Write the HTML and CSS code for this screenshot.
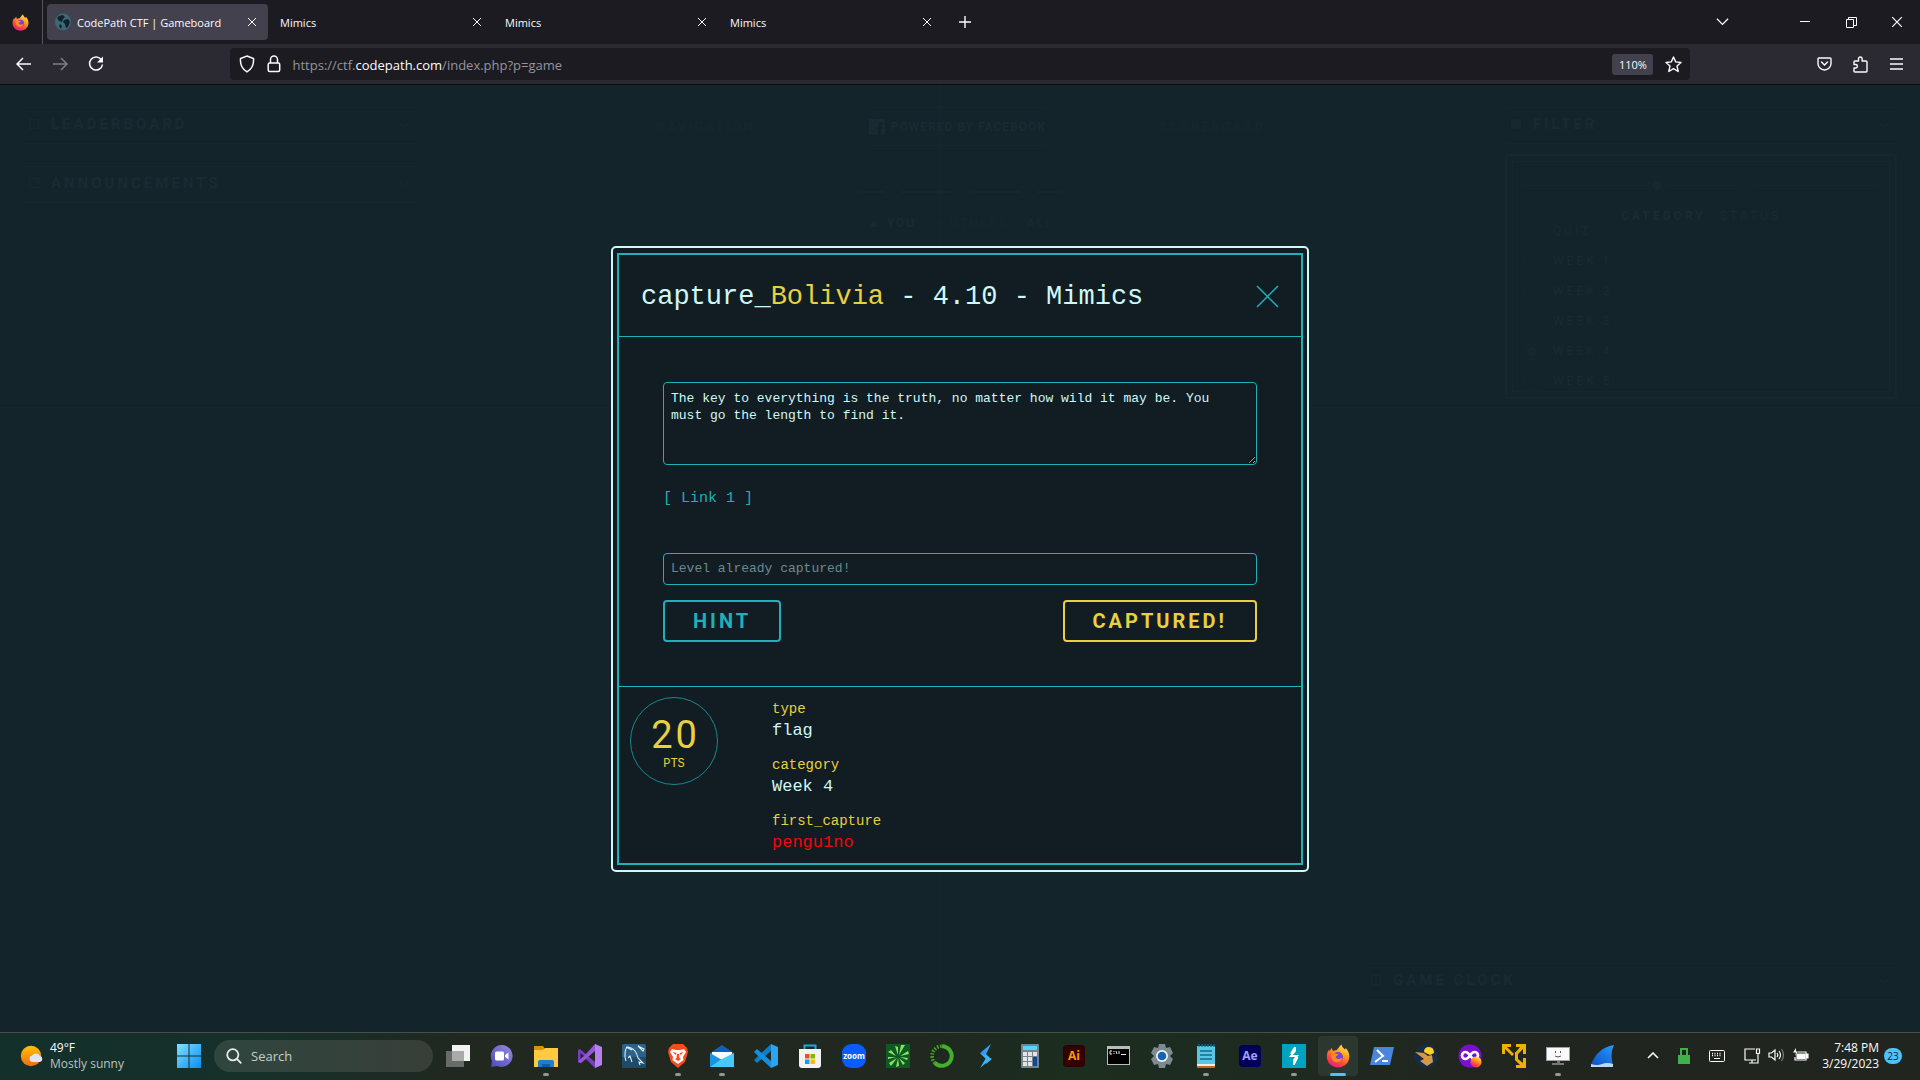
FILE: index.html
```html
<!DOCTYPE html>
<html lang="en">
<head>
<meta charset="utf-8">
<title>CodePath CTF | Gameboard</title>
<link rel="stylesheet" href="styles.css">
</head>
<body>
<svg width="0" height="0" class="defs" aria-hidden="true">
  <defs>
    <linearGradient id="fire" x1="0.8" y1="0" x2="0.3" y2="1"><stop offset="0" stop-color="#fff04a"/><stop offset=".4" stop-color="#ff9a1f"/><stop offset=".7" stop-color="#ff4a36"/><stop offset="1" stop-color="#e5178b"/></linearGradient>
    <linearGradient id="win" x1="0" y1="0" x2="1" y2="1"><stop offset="0" stop-color="#7fe0ff"/><stop offset="1" stop-color="#0a8df5"/></linearGradient>
    <linearGradient id="sun" x1="0" y1="0" x2="0" y2="1"><stop offset="0" stop-color="#ffc400"/><stop offset="1" stop-color="#ef6a1a"/></linearGradient>
    <linearGradient id="chat" x1="0" y1="1" x2="1" y2="0"><stop offset="0" stop-color="#4b4bb8"/><stop offset="1" stop-color="#9a8ae0"/></linearGradient>
    <linearGradient id="fin" x1="0" y1="1" x2="1" y2="0"><stop offset="0" stop-color="#0a4fc4"/><stop offset="1" stop-color="#2a9bff"/></linearGradient>
    <linearGradient id="bolt" x1="0" y1="0" x2="1" y2="1"><stop offset="0" stop-color="#2470ff"/><stop offset="1" stop-color="#4fe0ff"/></linearGradient>
    <symbol id="x" viewBox="0 0 10 10"><path d="M1 1l8 8M9 1l-8 8" fill="none" stroke="currentColor" stroke-width="1"/></symbol>
    <symbol id="down" viewBox="0 0 16 10"><path d="M1 1l7 7 7-7" fill="none" stroke="currentColor" stroke-width="1.6"/></symbol>
    <symbol id="firefox" viewBox="0 0 24 24"><path d="M12 23.500C5.500 23.500.8 18.700.8 12.600c0-3 .9-5.400 2.300-7.100l.4 2.300C4.400 5.600 5.200 4.500 6 4c0 1.400.5 2.300 1.300 2.900 1.200-.8 2.400-.9 3.200-.6C12.600 4.400 13.500 2 15.500.5c.4 2.500 2 3.700 3.600 5.200l.6-1.700c2.400 2.700 3.600 5.400 3.600 8.600 0 6.100-4.800 10.900-11.300 10.900z" fill="url(#fire)"/><circle cx="12" cy="13" r="5" fill="#7a3fe0"/><path d="M5.500 9.500c2.500-.7 4.700 0 7 1-1 1.400-2.500 1.300-3 2.700 1.500 2.400 4.500 2.300 7 .3-1 4-4 5.500-7 4.500-3.500-1.200-5-4.500-4-8.500z" fill="#ff8a26"/></symbol>
  </defs>
</svg>

<header class="titlebar">
  <div class="view"><svg width="17" height="17"><use href="#firefox"/></svg></div>
  <nav class="tabs">
    <div class="tab tab-active">
      <svg width="16" height="18" viewBox="0 0 16 18"><ellipse cx="8" cy="9" rx="8" ry="8.500" fill="#3c6878"/><path d="M4 3l4-1 2 2-2 2-1 3-3-1-2-3zM9 7l4-1 2 3-2 5-2 1-1-4-2-2zM5 11l2 2-1 3-2-3z" fill="#12222c"/></svg>
      <span class="tab-title">CodePath CTF | Gameboard</span>
      <button class="icon tab-x" aria-label="Close tab"><svg width="10" height="10"><use href="#x"/></svg></button>
    </div>
    <div class="tab"><span class="tab-title">Mimics</span><button class="icon tab-x" aria-label="Close tab"><svg width="10" height="10"><use href="#x"/></svg></button></div>
    <div class="tab"><span class="tab-title">Mimics</span><button class="icon tab-x" aria-label="Close tab"><svg width="10" height="10"><use href="#x"/></svg></button></div>
    <div class="tab"><span class="tab-title">Mimics</span><button class="icon tab-x" aria-label="Close tab"><svg width="10" height="10"><use href="#x"/></svg></button></div>
  </nav>
  <button class="icon tool" aria-label="New tab"><svg width="12" height="12" viewBox="0 0 12 12"><path d="M6 0v12M0 6h12" stroke="currentColor" stroke-width="1.400"/></svg></button>
  <button class="icon tool all-tabs" aria-label="List all tabs"><svg width="13" height="8"><use href="#down"/></svg></button>
  <div class="window-buttons">
    <button class="icon" aria-label="Minimize"><svg width="10" height="10" viewBox="0 0 10 10"><path d="M0 4.500h10" stroke="currentColor"/></svg></button>
    <button class="icon" aria-label="Restore"><svg width="11" height="11" viewBox="0 0 11 11" fill="none" stroke="currentColor"><path d="M.5 2.500h7v8h-7zM2.500 2.500v-2h8v8h-3"/></svg></button>
    <button class="icon" aria-label="Close"><svg width="12" height="12"><use href="#x"/></svg></button>
  </div>
</header>

<div class="toolbar">
  <button class="icon tool" aria-label="Back"><svg width="16" height="14" viewBox="0 0 16 14" fill="none" stroke="currentColor" stroke-width="1.500"><path d="M15 7H1.500M7 1L1 7l6 6"/></svg></button>
  <button class="icon tool dim" aria-label="Forward"><svg width="16" height="14" viewBox="0 0 16 14" fill="none" stroke="currentColor" stroke-width="1.500"><path d="M1 7h13.500M9 1l6 6-6 6"/></svg></button>
  <button class="icon tool" aria-label="Reload"><svg width="16" height="16" viewBox="0 0 16 16"><path d="M13.500 4A6.500 6.500 0 1 0 14.500 8.500" fill="none" stroke="currentColor" stroke-width="1.500"/><path d="M15 .5v6H9z" fill="currentColor"/></svg></button>
  <div class="spring"></div>
  <div class="urlbar">
    <svg width="16" height="18" viewBox="0 0 16 18" fill="none" stroke="currentColor" stroke-width="1.500"><path d="M8 1l6.500 2.500C15 9.500 13 14 8 16.800 3 14 1 9.500 1.500 3.500z"/></svg>
    <svg width="14" height="18" viewBox="0 0 14 18" fill="none" stroke="currentColor" stroke-width="1.500"><rect x="1.200" y="8" width="11.500" height="8.500" rx="1.500"/><path d="M3.500 8V4.500a3.500 3.500 0 0 1 7 0V8"/></svg>
    <div class="url">https://ctf.<b>codepath.com</b>/index.php?p=game</div>
    <button class="zoom">110%</button>
    <svg width="17" height="17" viewBox="0 0 17 17" fill="none" stroke="currentColor" stroke-width="1.400" stroke-linejoin="round"><path d="M8.500 1l2.200 4.900 5.300.6-4 3.500 1.200 5.500-4.700-2.800-4.700 2.800L5 10 1 6.500l5.300-.6z"/></svg>
  </div>
  <div class="spring"></div>
  <button class="icon tool" aria-label="Save to Pocket"><svg width="15" height="14" viewBox="0 0 15 14" fill="none" stroke="currentColor" stroke-width="1.400"><path d="M2 1h11q1 0 1 1v4.500a6.500 6.500 0 0 1-13 0V2q0-1 1-1z"/><path d="M4.500 5l3 3 3-3" stroke-linecap="round"/></svg></button>
  <button class="icon tool" aria-label="Extensions"><svg width="15" height="17" viewBox="0 0 15 17" fill="none" stroke="currentColor" stroke-width="1.400" stroke-linejoin="round"><path d="M5.500 5V2.800a1.800 1.800 0 0 1 3.600 0V5H13q1 0 1 1v9q0 1-1 1H2q-1 0-1-1v-3h2a1.800 1.800 0 0 0 0-3.500H1V6q0-1 1-1z"/></svg></button>
  <button class="icon tool" aria-label="Menu"><svg width="13" height="12" viewBox="0 0 13 12"><path d="M0 1h13M0 6h13M0 11h13" stroke="currentColor" stroke-width="1.500"/></svg></button>
</div>

<main class="page">
  <div class="board" aria-hidden="true">
    <div class="side">
      <div class="panel"><i class="mark"></i>LEADERBOARD<svg class="caret" width="15" height="9"><use href="#down"/></svg></div>
      <div class="panel"><i class="mark"></i>ANNOUNCEMENTS<svg class="caret" width="15" height="9"><use href="#down"/></svg></div>
    </div>
    <div class="middle">
      <div class="site-nav">
        <span class="nav-link">NAVIGATION</span>
        <span class="powered"><svg width="16" height="16" viewBox="0 0 16 16"><path d="M0 0h16v16h-4v-6h2V8h-2V6h2V3h-2q-3 0-3 3v2H7v2h2v6H0z" fill="currentColor"/></svg>POWERED BY FACEBOOK</span>
        <span class="nav-link">SCOREBOARD</span>
      </div>
      <div class="scope"><i class="ring"></i><i class="ring"></i><i class="ring"></i></div>
      <div class="scope-names"><span>▲ YOU</span><span class="others">● OTHERS</span><span class="all">ALL</span></div>
    </div>
    <div class="side">
      <div class="panel"><i class="mark solid"></i>FILTER<svg class="caret" width="15" height="9"><use href="#down"/></svg></div>
      <div class="filter"><div class="filter-in">
        <div class="filter-track"><i class="ring on"></i><i class="ring"></i></div>
        <div class="filter-names"><b>CATEGORY</b><span>STATUS</span></div>
        <ul class="weeks">
          <li><i class="ring"></i>QUIZ</li><li><i class="ring"></i>WEEK 1</li><li><i class="ring"></i>WEEK 2</li><li><i class="ring"></i>WEEK 3</li><li><i class="ring on"></i>WEEK 4</li><li><i class="ring"></i>WEEK 5</li>
        </ul>
      </div></div>
    </div>
  </div>
  <div class="panel clock-panel" aria-hidden="true"><i class="mark"></i>GAME CLOCK<svg class="caret" width="15" height="9"><use href="#down"/></svg></div>

  <div class="overlay">
    <section class="modal" role="dialog" aria-labelledby="modal-title">
      <div class="modal-in">
        <div class="modal-head">
          <h1 id="modal-title">capture_<span class="gold">Bolivia</span> - 4.10 - Mimics</h1>
          <button class="icon modal-x" aria-label="Close"><svg width="23" height="23" viewBox="0 0 23 23"><path d="M1 1l21 21M22 1L1 22" stroke="currentColor" stroke-width="1.500"/></svg></button>
        </div>
        <form class="modal-body">
          <textarea class="field prompt" aria-label="Challenge" readonly>The key to everything is the truth, no matter how wild it may be. You must go the length to find it.</textarea>
          <a class="link" href="#">[ Link 1 ]</a>
          <input class="field answer" type="text" aria-label="Answer" placeholder="Level already captured!">
          <div class="actions">
            <button class="cta" type="button">HINT</button>
            <button class="cta cta-gold" type="button">CAPTURED!</button>
          </div>
        </form>
        <div class="modal-foot">
          <div class="points"><span class="points-n">20</span><span class="points-u">PTS</span></div>
          <dl class="facts">
            <div><dt>type</dt><dd>flag</dd></div>
            <div><dt>category</dt><dd>Week 4</dd></div>
            <div><dt>first_capture</dt><dd class="red">pengu1no</dd></div>
          </dl>
        </div>
      </div>
    </section>
  </div>
</main>

<footer class="taskbar">
  <div class="weather">
    <svg width="24" height="22" viewBox="0 0 24 22"><circle cx="11" cy="11" r="10.200" fill="url(#sun)"/><path d="M12 17a3.300 3.300 0 0 1 0-6.400 4.500 4.500 0 0 1 8 .5 3 3 0 0 1-.3 5.900z" fill="#dbe8fa"/></svg>
    <div><div>49°F</div><div class="muted">Mostly sunny</div></div>
  </div>
  <button class="icon start" aria-label="Start"><svg width="24" height="24" viewBox="0 0 24 24"><path d="M0 0h11.500v11.500H0zM12.500 0H24v11.500H12.500zM0 12.500h11.500V24H0zM12.500 12.500H24V24H12.500z" fill="url(#win)"/></svg></button>
  <label class="search"><svg width="16" height="16" viewBox="0 0 16 16" fill="none" stroke="#e6e9e7" stroke-width="1.800"><circle cx="6.800" cy="6.800" r="5.600"/><path d="M11 11l4.300 4.300"/></svg><input type="text" placeholder="Search" aria-label="Search"></label>
  <div class="apps">
    <button class="app" aria-label="Task view"><svg viewBox="0 0 24 24"><path d="M6 1h18v16H6z" fill="#f3f3f3"/><path d="M0 7h18v16H0z" fill="#777" fill-opacity=".85"/><path d="M6 7h12v10H6z" fill="#aaa"/></svg></button>
    <button class="app" aria-label="Chat"><svg viewBox="0 0 24 24"><path d="M12 1a11 11 0 1 1-5 21l-6 1 1-6A11 11 0 0 1 12 1z" fill="url(#chat)"/><rect x="5" y="7.500" width="9" height="9" rx="1.500" fill="#fff"/><path d="M15 11l3.500-2.500v7L15 13z" fill="#fff"/></svg></button>
    <button class="app run" aria-label="File Explorer"><svg viewBox="0 0 24 24"><path d="M0 2h9l2 3v4H0z" fill="#d9920c"/><path d="M0 6h9l2-2h13v19H0z" fill="#ffca3f"/><path d="M4 23v-5q0-2 2-2h12q2 0 2 2v5z" fill="#1b7fcf"/><path d="M8 20h8v3H8z" fill="#0d5ea6"/></svg></button>
    <button class="app" aria-label="Visual Studio"><svg viewBox="0 0 24 24"><path fill-rule="evenodd" d="M0 6l2-1 15 13v6L8 15l-6 4-2-1zM2.500 9v6L6 12z" fill="#7a3cc4"/><path d="M17 0v7L3 19l-3-1 8-8z" fill="#9656dc"/><path d="M17 0l7 3v18l-7 3z" fill="#b57ff0"/></svg></button>
    <button class="app" aria-label="MySQL Workbench"><svg viewBox="0 0 24 24"><rect width="24" height="24" rx="2" fill="#2a6289"/><path d="M0 13h24v9q0 2-2 2H2q-2 0-2-2z" fill="#1d4b6c"/><path d="M4 17C2 12 3 3 6 3c6 1 9 6 10 11l5 5-4-1 1 3M4 3l6 3M6 14l2-2 2 6M16 2l5 5 1-2z" fill="none" stroke="#e0edf5" stroke-width="1.100"/></svg></button>
    <button class="app run" aria-label="Brave"><svg viewBox="0 0 24 24"><path d="M7 0h10l3 3 1 1 1 4-3 10-7 6-7-6L2 8l1-4 1-1z" fill="#fb4a1c"/><path d="M6 5l4 1h4l4-1 2 3-3 5 .5 3L12 20l-5.500-4 .5-3-3-5z" fill="#fff"/><path d="M6.500 8l4 1-1 2zM17.500 8l-4 1 1 2zM11 10h2l.5 4 1.500 1-3 2-3-2 1.500-1z" fill="#fb4a1c"/></svg></button>
    <button class="app run" aria-label="Mail"><svg viewBox="0 0 24 24"><path d="M0 9l12-8 12 8v14H0z" fill="#1160b8"/><path d="M2 8h20v9H2z" fill="#f6fafd"/><path d="M0 9l12 7L0 23z" fill="#1894e0"/><path d="M24 9v14H0l12-8z" fill="#47cbf6"/></svg></button>
    <button class="app" aria-label="Visual Studio Code"><svg viewBox="0 0 24 24"><path d="M17 0v7L3 19l-3-3z" fill="#0c7dc6"/><path d="M17 24v-7L3 5 0 8z" fill="#1690de"/><path d="M17 0l7 3v18l-7 3z" fill="#2ba4f1"/></svg></button>
    <button class="app" aria-label="Microsoft Store"><svg viewBox="0 0 24 24"><path d="M6.500 7V1.500h11V7" fill="none" stroke="#1aa5ec" stroke-width="2"/><path d="M1 5h22v16q0 3-3 3H4q-3 0-3-3z" fill="#f2f2f2"/><path d="M7 10h4.500v4.500H7z" fill="#f25022"/><path d="M12.500 10H17v4.500h-4.500z" fill="#7fba00"/><path d="M7 15.500h4.500V20H7z" fill="#00a4ef"/><path d="M12.500 15.500H17V20h-4.500z" fill="#ffb900"/></svg></button>
    <button class="app" aria-label="Zoom"><span class="tile zoom-tile">zoom</span></button>
    <button class="app" aria-label="Green burst"><svg viewBox="0 0 24 24"><path d="M0 0h24v24H0z" fill="#0d5a22"/><path d="M12 11L9 2l3 1zM13 11l2-10h4zM14 12l8-5 1 3zM14 13l8 1-1 2zM13 14l6 5-2 2zM12 14l1 8-3 1zM11 14l-6 8-2-3zM10 13l-8 2v-2zM10 12L2 8l3-2z" fill="#8fe060"/></svg></button>
    <button class="app" aria-label="Anaconda"><svg viewBox="0 0 24 24" fill="none" stroke="#43b02a"><path d="M12 2.200a9.800 9.800 0 1 1-7 16.800" stroke-width="4"/><path d="M5 19A9.800 9.800 0 0 1 12 2.200" stroke-width="3.500" stroke-dasharray="1.500 1.500"/></svg></button>
    <button class="app" aria-label="Streamlabs"><svg viewBox="0 0 24 24"><path d="M17 0L6 9l6 5-6 10 11-9-5-5z" fill="url(#bolt)"/><path d="M6 9l12 6-6 5 1-4z" fill="#38b6ff"/></svg></button>
    <button class="app" aria-label="Calculator"><svg viewBox="0 0 24 24"><rect x="3" width="18" height="24" rx="1" fill="#77828e"/><path d="M5 2h14v4H5z" fill="#4fd8fb"/><path d="M5 8h4v4H5zM10 8h4v4h-4zM15 8h4v4h-4zM5 13h4v4H5zM10 13h4v4h-4zM5 18h4v4H5zM10 18h4v4h-4z" fill="#e2e5e8"/><path d="M15 13h4v9h-4z" fill="#0d4a94"/></svg></button>
    <button class="app" aria-label="Illustrator"><span class="tile ai">Ai</span></button>
    <button class="app" aria-label="Terminal"><svg viewBox="0 0 24 24"><path d="M1 2h23v19H1z" fill="#b8bcbf"/><path d="M2 5h21v15H2z"/><path d="M6 7H4v3h2M8 7v1M8 9v1M10 7l1 3M13 7v3M15 10.500h5" fill="none" stroke="#eee"/></svg></button>
    <button class="app" aria-label="Settings"><svg viewBox="0 0 24 24"><path d="M9 0h6l1 4 4-1 3 6-3 3 3 3-3 6-4-1-1 4H9l-1-4-4 1-3-6 3-3-3-3 3-6 4 1z" fill="#7f8992"/><circle cx="12" cy="12" r="6" fill="#f0f3f5"/><circle cx="12" cy="12" r="4.300" fill="#1464b4"/></svg></button>
    <button class="app run" aria-label="Notepad"><svg viewBox="0 0 24 24"><path d="M3 20h18v4H3z" fill="#c4671c"/><path d="M3 2h18v19H3z" fill="#59c7e4"/><path d="M3 20h18v2H3z" fill="#eee"/><path d="M5 0v3M8 0v3M11 0v3M14 0v3M17 0v3M20 0v3" stroke="#1b6a8a" stroke-width="1.300"/><path d="M6 7h12M6 11h12M6 15h12" stroke="#13698a" stroke-width="1.600"/></svg></button>
    <button class="app" aria-label="After Effects"><span class="tile ae">Ae</span></button>
    <button class="app run" aria-label="Burp Suite"><svg viewBox="0 0 24 24"><path d="M0 0h24v24H0z" fill="#00a3bf"/><path d="M13 3v4l-4 5h6l-3 4v5M12.500 4L9 10M12 20l3.500-7" fill="none" stroke="#fff" stroke-width="2"/></svg></button>
    <button class="app current" aria-label="Firefox"><svg><use href="#firefox"/></svg></button>
    <button class="app" aria-label="PowerShell"><svg viewBox="0 0 24 24"><path d="M4 3h20l-4 18H0z" fill="#4a86dc"/><path d="M7 6l6 6-8 6M12 17h6" fill="none" stroke="#fff" stroke-width="2"/></svg></button>
    <button class="app" aria-label="Mole"><svg viewBox="0 0 24 24"><circle cx="12" cy="12" r="12" fill="#172b45"/><path d="M1 8l9 1 4 3 4-1 1 7-6 4-7-5 4-2z" fill="#d39a45"/><path d="M10 8q0-5 5-5t5 6l-4 2z" fill="#ffd21f"/></svg></button>
    <button class="app" aria-label="Firefox profile"><svg viewBox="0 0 24 24"><circle cx="12" cy="12" r="11.500" fill="#7a0fd0"/><path d="M12 11.500c-2-3-3-3.500-4.500-3.500a3.500 3.500 0 0 0 0 7c1.500 0 2.500-.5 4.500-3.500s3-3.500 4.500-3.500a3.500 3.500 0 0 1 0 7c-1.500 0-2.500-.5-4.500-3.500z" fill="none" stroke="#fff" stroke-width="2.600"/><circle cx="18" cy="18" r="5.500" fill="url(#fire)"/></svg></button>
    <button class="app" aria-label="VMware"><svg viewBox="0 0 24 24" fill="#efb100"><path d="M0 0h9v3H5l7 7-2 2-7-7v5H0zM14 0h10v10h-3V5l-6 6-2-2 5-6h-4zM24 14v10H14v-3h4l-5-5V8h3v7l5 4v-5z"/></svg></button>
    <button class="app run" aria-label="Monitor"><svg viewBox="0 0 24 24"><path d="M0 3h24v14H0z" fill="#9aa0a3"/><path d="M1 4h22v12H1z" fill="#fafafa"/><path d="M11 17h3v2h4v2H6v-2h5z" fill="#777"/><path d="M9.500 7v2M14.500 7v2M9 12q3 2 6 0" stroke="#555" fill="none"/></svg></button>
    <button class="app" aria-label="Wireshark"><svg viewBox="0 0 24 24"><path d="M1 21C5 10 12 3 24 1c-3 6-3 13-1 20z" fill="url(#fin)"/><path d="M1 20q6 2 11 0t11 0v3H1z" fill="#bdd8f7"/></svg></button>
  </div>
  <div class="tray">
    <svg width="12" height="7" viewBox="0 0 12 7" fill="none" stroke="currentColor" stroke-width="1.600"><path d="M1 6l5-5 5 5"/></svg>
    <svg width="12" height="16" viewBox="0 0 12 16"><path d="M0 7h12v9H0z" fill="#3fb04a"/><path d="M3 7V1h6v6" fill="none" stroke="#3fb04a" stroke-width="2"/></svg>
    <svg width="16" height="12" viewBox="0 0 16 12" fill="none" stroke="currentColor"><rect x=".5" y=".5" width="15" height="11" rx="1"/><path d="M3 3.500h10M3 5.500h10" stroke-dasharray="1 1.500" stroke-width="1.400"/><path d="M5 8.500h6"/></svg>
    <div class="status">
      <svg width="17" height="16" viewBox="0 0 17 16" fill="none" stroke="currentColor" stroke-width="1.200"><path d="M11 1H1v11h11M5 15h7M8 12v3"/><path d="M12.500 1v4.500h3V1zM14 5.500V15h-2"/></svg>
      <svg width="17" height="14" viewBox="0 0 17 14" fill="none" stroke="currentColor" stroke-width="1.200"><path d="M1 5v4h2.500L7 12V2L3.500 5zM9 5q1.500 2 0 4M11 3q3 4 0 8"/><path d="M13.500 1q4 6 0 12" opacity=".4"/></svg>
      <svg width="17" height="14" viewBox="0 0 17 14" fill="none" stroke="currentColor" stroke-width="1.200"><path d="M6 4h8v8H3V9"/><path d="M5 6h7.500v4.500H5zM14 6h2v4h-2z" fill="currentColor"/><path d="M4 0L1 4.500h3L3 8l3-4.500H4z" fill="currentColor" stroke="none"/></svg>
    </div>
    <div class="clock"><div>7:48 PM</div><div>3/29/2023</div></div>
    <span class="count">23</span>
  </div>
</footer>
</body>
</html>
```
FILE: styles.css
```css
* { box-sizing: border-box; }
:root {
  --teal: #1fb0b8;
  --gold: #e8d040;
  --pale: #cff8f8;
  --faint: #182b33;
  --ui: "Open Sans", "Noto Sans", sans-serif;
  --mono: "Liberation Mono", "DejaVu Sans Mono", monospace;
  --label: Roboto, "Liberation Sans", sans-serif;
}
body {
  margin: 0;
  min-height: 100vh;
  display: flex;
  flex-direction: column;
  font: 12px/16px var(--ui);
  color: #fbfbfe;
  background: #14242b;
}
svg { display: block; flex: none; }
button { font: inherit; cursor: pointer; }
.defs { position: absolute; }
.icon {
  display: grid;
  place-items: center;
  padding: 0;
  border: 0;
  background: none;
  color: inherit;
}

/* Browser chrome */
.titlebar {
  display: flex;
  align-items: center;
  height: 44px;
  background: #1c1b22;
}
.view {
  width: 43px;
  height: 44px;
  padding-left: 12px;
  display: flex;
  align-items: center;
  border-right: 1px solid #55545f;
}
.tabs { display: flex; gap: 4px; padding: 0 4px; }
.tab {
  display: flex;
  align-items: center;
  gap: 6px;
  width: 221px;
  height: 36px;
  padding: 0 8px;
  border-radius: 4px;
}
.tab-active { background: #42414d; }
.tab-title { flex: 1; padding-top: 1px; font-size: 11px; white-space: nowrap; }
.tab-x { width: 16px; height: 16px; }
.tool { width: 36px; height: 36px; flex: none; }
.dim { opacity: .4; }
.all-tabs { margin-left: auto; margin-right: 42px; }
.window-buttons { display: flex; }
.window-buttons .icon { width: 46px; height: 44px; }
.toolbar {
  display: flex;
  align-items: center;
  height: 41px;
  padding: 0 6px;
  background: #2b2a33;
  border-bottom: 1px solid #0c0c0d;
}
.spring { flex: 2; }
.urlbar {
  flex: 25;
  display: flex;
  align-items: center;
  gap: 12px;
  height: 32px;
  padding: 0 8px 0 9px;
  border-radius: 4px;
  background: #1c1b22;
}
.url { flex: 1; padding-top: 1px; font-size: 13px; color: #95949c; }
.url b { font-weight: 400; color: #fbfbfe; }
.zoom {
  width: 41px;
  height: 21px;
  padding: 0;
  border: 0;
  border-radius: 3px;
  background: #42414d;
  color: inherit;
  font-size: 11px;
  line-height: 21px;
}

/* Game board behind the dialog */
.page {
  position: relative;
  flex: 1;
  display: flex;
  flex-direction: column;
  justify-content: space-between;
  padding: 22px 23px 32px;
  background:
    linear-gradient(#16272f, #16272f) 49% 0 / 1px 100% no-repeat,
    linear-gradient(#16272f, #16272f) 0 34% / 100% 1px no-repeat,
    #14242b;
  color: var(--faint);
  font: 700 15px/20px var(--label);
  letter-spacing: 3px;
}
.board { display: grid; grid-template-columns: 21% 1fr 392px; }
.side { display: flex; flex-direction: column; gap: 22px; }
.panel {
  display: flex;
  align-items: center;
  gap: 12px;
  height: 37px;
  padding: 0 6px 3px;
  border: solid #16272f;
  border-width: 1px 0;
}
.caret { margin-left: auto; color: #16282f; }
.mark { width: 10px; height: 10px; border: 1px solid #172930; }
.solid { background: #172930; }
.clock-panel { align-self: flex-end; width: 532px; }
.middle { padding: 0 22%; font-size: 12px; }
.site-nav { display: flex; justify-content: space-between; align-items: center; white-space: nowrap; }
.nav-link { color: #14292f; font-weight: 400; }
.powered {
  display: flex;
  align-items: center;
  gap: 6px;
  height: 39px;
  border: solid #16272f;
  border-width: 1px 0;
  letter-spacing: 1px;
}
.scope {
  display: flex;
  justify-content: space-around;
  width: 204px;
  margin: 37px auto 0;
  background: linear-gradient(#13282f, #13282f) 0 50% / 100% 2px no-repeat;
}
.ring {
  width: 17px;
  height: 17px;
  border: 1px solid #16282f;
  border-radius: 50%;
  background: #14242b;
}
.on { background: radial-gradient(circle, #18282a 4px, #14242b 5px); }
.scope-names { display: flex; justify-content: space-between; width: 186px; margin: 13px auto 0; letter-spacing: 2px; }
.others { color: #1a252b; }
.all { color: #14292f; }
.filter {
  margin-top: -12px;
  padding: 5px;
  border: 2px solid #16272e;
  border-radius: 4px;
}
.filter-in { height: 231px; padding: 15px 10px; border: 1px solid #16272e; }
.filter-track { display: flex; justify-content: center; gap: 72px; background: linear-gradient(#16272e, #16272e) 0 50% / 100% 1px no-repeat; }
.filter-names { display: flex; justify-content: center; gap: 14px; padding-top: 14px; font-size: 12px; line-height: 16px; }
.filter-names span { font-weight: 400; }
.weeks {
  display: grid;
  gap: 16px;
  margin: 0;
  padding: 0;
  list-style: none;
  font-size: 12px;
  font-weight: 400;
  line-height: 14px;
}
.weeks li { display: flex; align-items: center; gap: 13px; height: 14px; }

/* Capture dialog */
.overlay {
  position: absolute;
  inset: 0;
  display: grid;
  place-items: center;
  letter-spacing: normal;
  font-family: var(--mono);
  font-weight: 400;
}
.modal {
  width: 698px;
  max-width: 100%;
  padding: 5px 4px;
  border: 2px solid var(--pale);
  border-radius: 5px;
  background: #121d23;
  color: var(--pale);
}
.modal-in { border: 2px solid var(--teal); }
.modal-head {
  display: flex;
  align-items: center;
  justify-content: space-between;
  height: 82px;
  padding: 3px 22px 0;
  border-bottom: 1px solid var(--teal);
}
h1 { margin: 0; font-size: 27px; line-height: 36px; font-weight: 400; }
.gold { color: var(--gold); }
.modal-x { color: var(--teal); }
.modal-body { display: flex; flex-direction: column; padding: 45px 44px 44px; }
.field {
  border: 1px solid var(--teal);
  border-radius: 4px;
  background: none;
  color: var(--pale);
  font: 13px/17px var(--mono);
  outline: 0;
}
.prompt { height: 83px; padding: 7px 20px 6px 7px; color-scheme: dark; }
.link { align-self: flex-start; margin: 25px 0 45px; font-size: 15px; line-height: 18px; color: var(--teal); text-decoration: none; }
.answer { height: 32px; padding: 0 7px; }
.answer::placeholder { color: #6c8a8e; opacity: 1; }
.actions { display: flex; justify-content: space-between; margin-top: 15px; }
.cta {
  height: 42px;
  padding: 0 28px;
  border: 2px solid var(--teal);
  border-radius: 4px;
  background: none;
  color: var(--teal);
  font: 700 20px/38px var(--label);
  letter-spacing: 3px;
}
.cta-gold { border-color: var(--gold); color: var(--gold); }
.modal-foot { display: flex; gap: 54px; padding: 10px 11px 8px; border-top: 1px solid var(--teal); }
.points {
  display: flex;
  flex-direction: column;
  align-items: center;
  width: 88px;
  height: 88px;
  padding-top: 17px;
  border: 1px solid #1a878e;
  border-radius: 50%;
  color: var(--gold);
}
.points-n { font: 38px/40px var(--label); letter-spacing: 3px; padding-left: 3px; }
.points-u { font-size: 12px; line-height: 18px; }
.facts { display: grid; gap: 12px; margin: 0; padding-top: 2px; }
dt { font-size: 14px; line-height: 20px; color: var(--gold); }
dd { margin: 0; font-size: 17px; line-height: 24px; }
.red { color: #f00606; }

/* Taskbar */
.taskbar {
  display: flex;
  align-items: center;
  height: 48px;
  padding-bottom: 2px;
  border-top: 1px solid #474f48;
  background: linear-gradient(90deg, #14302a 0, #16302a 14%, #202820 24%, #20281f 48%, #1b2e20 56%, #1e2a20 66%, #21251f 80%, #20251f 100%);
}
.weather { display: flex; align-items: center; gap: 6px; width: 167px; padding-left: 20px; }
.muted { color: #b9c4c0; }
.start { width: 44px; height: 44px; }
.search {
  display: flex;
  align-items: center;
  gap: 9px;
  width: 219px;
  height: 32px;
  margin: 0 3px;
  padding: 0 12px;
  border-radius: 16px;
  background: linear-gradient(90deg, #2f463f, #383e38);
}
.search input { width: 100%; padding: 0; border: 0; outline: 0; background: none; font: 13px/20px var(--ui); color: #fff; }
.search input::placeholder { color: #c6cdca; opacity: 1; }
.apps { display: flex; }
.app {
  position: relative;
  display: grid;
  place-items: center;
  width: 40px;
  height: 40px;
  margin: 0 2px;
  padding: 0;
  border: 0;
  border-radius: 4px;
  background: none;
}
.app > svg { width: 24px; height: 24px; }
.run::after, .current::after {
  content: "";
  position: absolute;
  bottom: 0;
  width: 6px;
  height: 3px;
  border-radius: 2px;
  background: #929992;
}
.current { background: #2c382f; }
.current::after { width: 16px; background: #4cc2ff; }
.tile {
  width: 22px;
  height: 22px;
  border-radius: 4px;
  font: 700 12px/22px var(--ui);
  text-align: center;
}
.ai { background: #330000; color: #ff9a00; }
.ae { background: #00005b; color: #a3a0ff; }
.zoom-tile { width: 24px; height: 24px; border-radius: 9px; background: #0b5cff; color: #fff; font-size: 8px; line-height: 23px; }
.tray { display: flex; align-items: center; gap: 19px; margin-left: auto; padding-right: 18px; }
.status { display: flex; gap: 7px; }
.clock { text-align: right; }
.tray .clock { width: 60px; margin: 0 -14px 0 -9px; white-space: nowrap; }
.count { width: 18px; height: 16px; border-radius: 8px; background: #4cc2ff; color: #10222c; font-size: 10px; text-align: center; }
```
